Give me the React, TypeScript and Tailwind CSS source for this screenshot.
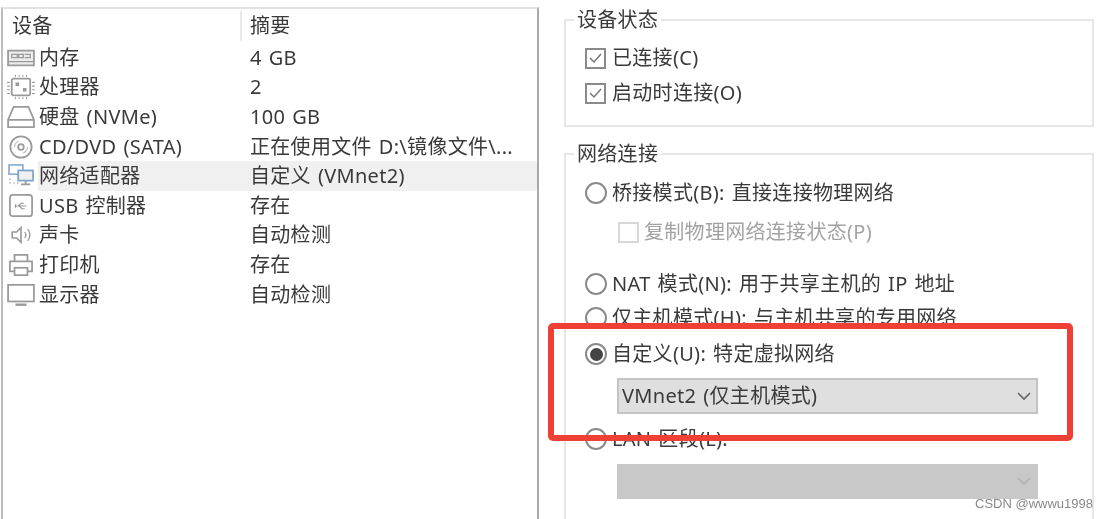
import type { ReactNode } from "react";

const stroke = "#9a9a9a";

function IconBox({ children }: { children: ReactNode }) {
	return (
		<svg width="28" height="24" viewBox="0 0 30 26" fill="none" stroke={stroke} strokeWidth="1.900">
			{children}
		</svg>
	);
}

const icons: Record<string, ReactNode> = {
	memory: (
		<IconBox>
			<rect x="1" y="5" width="28" height="16" fill="#ececec" />
			<path d="M5 9h6v3.500H5zM12.500 9h5v3.500h-5zM19 9h6v3.500h-6M1 17h28" strokeWidth="1.400" />
		</IconBox>
	),
	cpu: (
		<IconBox>
			<rect x="5" y="4" width="20" height="18" rx="2" />
			<path d="M3 8H0M3 12H0M3 16H0M3 20H0M27 8h3M27 12h3M27 16h3M27 20h3M9 2V0M13 2V0M17 2V0M21 2V0M9 26v-2M13 26v-2M17 26v-2M21 26v-2" strokeWidth="1.200" />
			<rect x="10" y="9" width="2" height="2" fill={stroke} />
			<rect x="18" y="15" width="2" height="2" fill={stroke} />
		</IconBox>
	),
	disk: (
		<IconBox>
			<path d="M7 2h16l6 14v8H1v-8zM1 16h28" />
		</IconBox>
	),
	cd: (
		<IconBox>
			<circle cx="15" cy="13" r="11.500" />
			<circle cx="15" cy="13" r="3" />
			<path d="M8 13a7 7 0 0 1 5-6.500M22 13a7 7 0 0 1-5 6.500" stroke="#c4c4c4" strokeWidth="1.400" />
		</IconBox>
	),
	network: (
		<IconBox>
			<rect x="2" y="1" width="15" height="10" stroke="#8fb0d2" />
			<rect x="12" y="7" width="16" height="11" stroke="#7ba5cf" fill="#f0f0f0" />
			<path d="M20 18v3M15 22h10" />
			<path d="M3 16v1M3 20v1M7 21h1M11 21h1" strokeDasharray="1 1" />
		</IconBox>
	),
	usb: (
		<IconBox>
			<rect x="3" y="1" width="24" height="23" rx="3" />
			<path d="M21 13H9M12 13l3-3h3M13 13l3 3h3M9 11v4" strokeWidth="1.300" />
		</IconBox>
	),
	sound: (
		<svg width="22" height="22" viewBox="0 0 30 26" fill="none" stroke={stroke} strokeWidth="2.200">
			<path d="M3 9h6l6-6v20l-6-6H3z" />
			<path d="M20 9a6 6 0 0 1 0 8M24 5a12 12 0 0 1 0 16" strokeWidth="1.800" />
		</svg>
	),
	printer: (
		<IconBox>
			<path d="M8 9V2h14v7M8 20H3V9h24v11h-5" />
			<rect x="8" y="16" width="14" height="8" />
		</IconBox>
	),
	monitor: (
		<IconBox>
			<rect x="1" y="2" width="28" height="18" />
			<path d="M9 23.500h12" strokeWidth="2.600" />
		</IconBox>
	),
};

const devices = [
	{ icon: "memory", name: "内存", summary: "4 GB" },
	{ icon: "cpu", name: "处理器", summary: "2" },
	{ icon: "disk", name: "硬盘 (NVMe)", summary: "100 GB" },
	{ icon: "cd", name: "CD/DVD (SATA)", summary: "正在使用文件 D:\\镜像文件\\..." },
	{ icon: "network", name: "网络适配器", summary: "自定义 (VMnet2)", selected: true },
	{ icon: "usb", name: "USB 控制器", summary: "存在" },
	{ icon: "sound", name: "声卡", summary: "自动检测" },
	{ icon: "printer", name: "打印机", summary: "存在" },
	{ icon: "monitor", name: "显示器", summary: "自动检测" },
];

function Checkbox({ disabled }: { disabled?: boolean }) {
	return (
		<span
			className={`flex h-[21px] w-[21px] shrink-0 items-center justify-center border-2 ${
				disabled ? "border-[#d8d8d8]" : "border-[#8a8a8a]"
			}`}
		>
			{!disabled && (
				<svg width="15" height="13" viewBox="0 0 15 13" fill="none" stroke="#777" strokeWidth="1.500">
					<path d="M2 6l4 4 7-8" />
				</svg>
			)}
		</span>
	);
}

function Radio({ checked }: { checked?: boolean }) {
	return (
		<span className="flex h-[22px] w-[22px] shrink-0 items-center justify-center rounded-full border-2 border-[#8a8a8a]">
			{checked && <span className="h-[13px] w-[13px] rounded-full bg-[#444]" />}
		</span>
	);
}

function Chevron({ color }: { color: string }) {
	return (
		<svg width="14" height="9" viewBox="0 0 14 9" fill="none" stroke={color} strokeWidth="1.600">
			<path d="M1 1l6 6 6-6" />
		</svg>
	);
}

function Group({ title, className, children }: { title: string; className: string; children: ReactNode }) {
	return (
		<fieldset className={`border-2 border-[#e6e6e6] ${className}`}>
			<legend className="ml-[8px] px-[3px] text-[20px] leading-[26px]">{title}</legend>
			<div className="pl-[19px]">{children}</div>
		</fieldset>
	);
}

export default function App() {
	return (
		<div className="relative h-[519px] w-[1107px] overflow-hidden bg-white tracking-[0.3px] text-[#3a3a3a] [font-family:'Noto_Sans','Noto_Sans_CJK_SC',sans-serif] [word-spacing:1.500px] blur-[0.7px]">
			<div className="flex pt-[7px]">
				{/* device list */}
				<div className="ml-px h-[512px] w-[538px] border-x-2 border-t-2 border-l-[#bdbdbd] border-r-[#a9a9a9] border-t-[#e2e2e2]">
					<div className="flex h-[34px] items-center text-[20px]">
						<span className="w-[237px] pl-[9px]">设备</span>
						<span className="h-[30px] border-l-2 border-[#e8e8e8] pl-[8px]">摘要</span>
					</div>
					{devices.map((d) => (
						<div key={d.name} className="flex h-[29.600px] items-center text-[20px] leading-none">
							<span className="flex w-[35px] shrink-0 justify-center">{icons[d.icon]}</span>
							<div className={`flex h-full flex-1 items-center ${d.selected ? "bg-[#f0f0f0]" : ""}`}>
								<span className="w-[212px] shrink-0 pl-[1px] whitespace-nowrap">{d.name}</span>
								<span className="whitespace-nowrap">{d.summary}</span>
							</div>
						</div>
					))}
				</div>

				{/* settings */}
				<div className="ml-[25px] flex w-[530px] flex-col">
					<Group title="设备状态" className="h-[120px]">
						<div className="flex items-center gap-[6px] pt-[10px] text-[20px] leading-[30px]">
							<Checkbox />
							<span>已连接(C)</span>
						</div>
						<div className="flex items-center gap-[6px] pt-[5px] text-[20px] leading-[30px]">
							<Checkbox />
							<span>启动时连接(O)</span>
						</div>
					</Group>
					<Group title="网络连接" className="mt-[14px] h-[420px]">
						<div className="mt-[9px] flex h-[34px] items-center gap-[5px] text-[20px]">
							<Radio />
							<span>桥接模式(B): 直接连接物理网络</span>
						</div>
						<div className="mt-[5px] ml-[33px] flex h-[34px] items-center gap-[5px] text-[20px] text-[#a3a3a3]">
							<Checkbox disabled />
							<span>复制物理网络连接状态(P)</span>
						</div>
						<div className="mt-[18px] flex h-[34px] items-center gap-[5px] text-[20px]">
							<Radio />
							<span>NAT 模式(N): 用于共享主机的 IP 地址</span>
						</div>
						<div className="flex h-[34px] items-center gap-[5px] text-[20px]">
							<Radio />
							<span>仅主机模式(H): 与主机共享的专用网络</span>
						</div>
						<div className="mt-[2px] flex h-[34px] items-center gap-[5px] text-[20px]">
							<Radio checked />
							<span>自定义(U): 特定虚拟网络</span>
						</div>
						<div className="mt-[7px] ml-[32px] flex h-[36px] w-[421px] items-center justify-between border-2 border-[#c4c4c4] bg-[#dfdfdf] pr-[5px] pl-[3px] text-[20px]">
							<span>VMnet2 (仅主机模式)</span>
							<Chevron color="#666" />
						</div>
						<div className="mt-[8px] flex h-[34px] items-center gap-[5px] text-[20px]">
							<Radio />
							<span>LAN 区段(L):</span>
						</div>
						<div className="mt-[8px] ml-[32px] flex h-[35px] w-[421px] items-center justify-end border-2 border-[#c8c8c8] bg-[#c8c8c8] pr-[5px]">
							<Chevron color="#b0b0b0" />
						</div>
					</Group>
				</div>
			</div>

			{/* annotation drawn over the dialog */}
			<div className="absolute top-[323px] left-[548px] h-[118px] w-[525px] rounded-[5px] border-[6px] border-[#ee4035]" />
			<span className="absolute top-[495px] left-[975px] text-[13px] leading-[18px] tracking-normal text-[#8a8a8a] [font-family:'Liberation_Sans',sans-serif] [word-spacing:0]">
				CSDN @wwwu1998
			</span>
		</div>
	);
}
